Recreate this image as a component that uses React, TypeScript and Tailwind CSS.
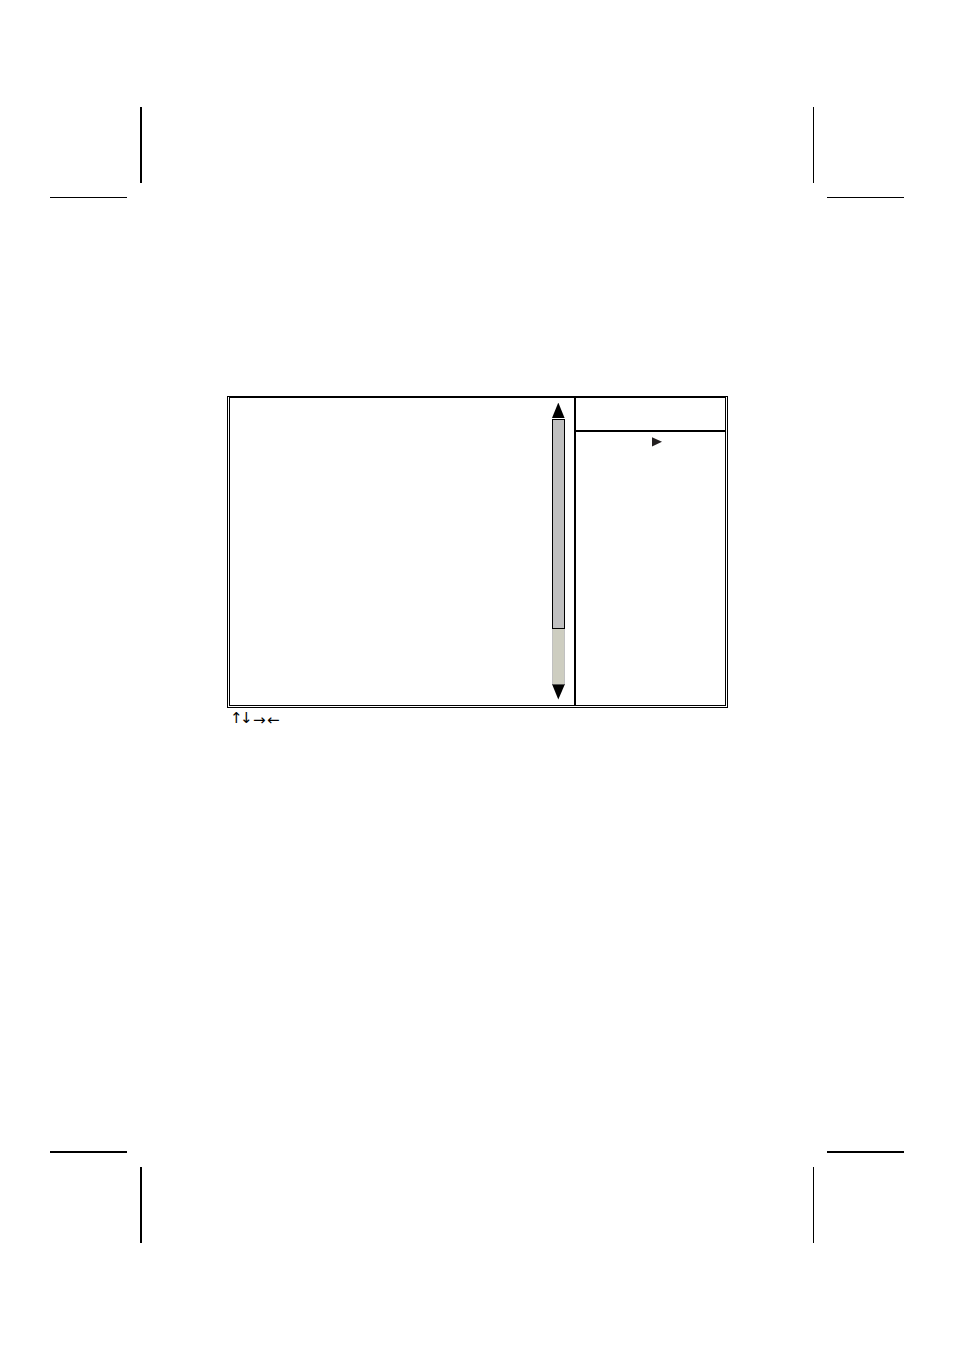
function TopCorners() {
  return (
    <div className="flex justify-between" aria-hidden="true">
      <div className="flex h-[91px] w-[92px] flex-col justify-between">
        <div className="h-19 w-0.5 self-end bg-black" />
        <div className="h-px w-[77px] bg-black" />
      </div>
      <div className="flex h-[91px] w-[91px] flex-col justify-between">
        <div className="h-19 w-px bg-black" />
        <div className="h-px w-[77px] self-end bg-black" />
      </div>
    </div>
  );
}

function BottomCorners() {
  return (
    <div className="flex justify-between" aria-hidden="true">
      <div className="flex h-[92px] w-[92px] flex-col justify-between">
        <div className="h-0.5 w-[77px] bg-black" />
        <div className="h-19 w-0.5 self-end bg-black" />
      </div>
      <div className="flex h-[92px] w-[91px] flex-col justify-between">
        <div className="h-0.5 w-[77px] self-end bg-black" />
        <div className="h-19 w-px bg-black" />
      </div>
    </div>
  );
}

function ScrollBar() {
  return (
    <div className="flex w-[13px] flex-col">
      <button type="button" aria-label="Scroll up" className="block h-4">
        <svg viewBox="0 0 13 16" className="block h-4 w-[13px]">
          <path d="M6.3 -0.5L12.6 15H0Z" fill="#000" />
        </svg>
      </button>
      <div className="flex flex-1 flex-col bg-[#cdcdc0]">
        <div className="h-[210px] border border-black bg-[#c0c0c0]" />
        <div className="flex-1 border-x border-[#c0c0c0]" />
      </div>
      <button type="button" aria-label="Scroll down" className="block h-4">
        <svg viewBox="0 0 13 16" className="block h-4 w-[13px]">
          <path d="M0 0H13L6.3 15.5Z" fill="#000" />
          <path d="M0 0H13V1H0Z" fill="#555" />
        </svg>
      </button>
    </div>
  );
}

export default function App() {
  return (
    <main className="flex min-h-screen flex-col bg-white px-[50px] pt-[107px] pb-[108px] font-['DejaVu_Sans',sans-serif] text-black">
      <TopCorners />
      <div className="flex flex-1 flex-col pt-[198px] pl-px">
        <section className="mx-auto w-full max-w-[501px]">
          <div className="flex h-[312px] border-[3px] border-t-2 border-double border-black [border-top-style:solid]">
            <div className="flex flex-1 justify-end pt-[5px] pr-[9px] pb-[5px]">
              <ScrollBar />
            </div>
            <div className="flex w-[151px] flex-col border-l-2 border-black">
              <div className="h-[34px] border-b-2 border-black" />
              <div className="flex justify-center pt-[5px] pl-3">
                <svg viewBox="0 0 10 10" className="h-[10px] w-[10px]" role="img" aria-label="Submenu">
                  <path d="M0 0.2L10 4.8L0 9.6Z" fill="#231f20" />
                </svg>
              </div>
            </div>
          </div>
          <div className="flex pt-[2px] pl-[3px] text-[15px] leading-4">
            <span className="w-[10px]">↑</span>
            <span className="w-[13px]">↓</span>
            <span className="w-[14px] leading-5">→</span>
            <span className="w-[14px] leading-5">←</span>
          </div>
        </section>
      </div>
      <BottomCorners />
    </main>
  );
}
